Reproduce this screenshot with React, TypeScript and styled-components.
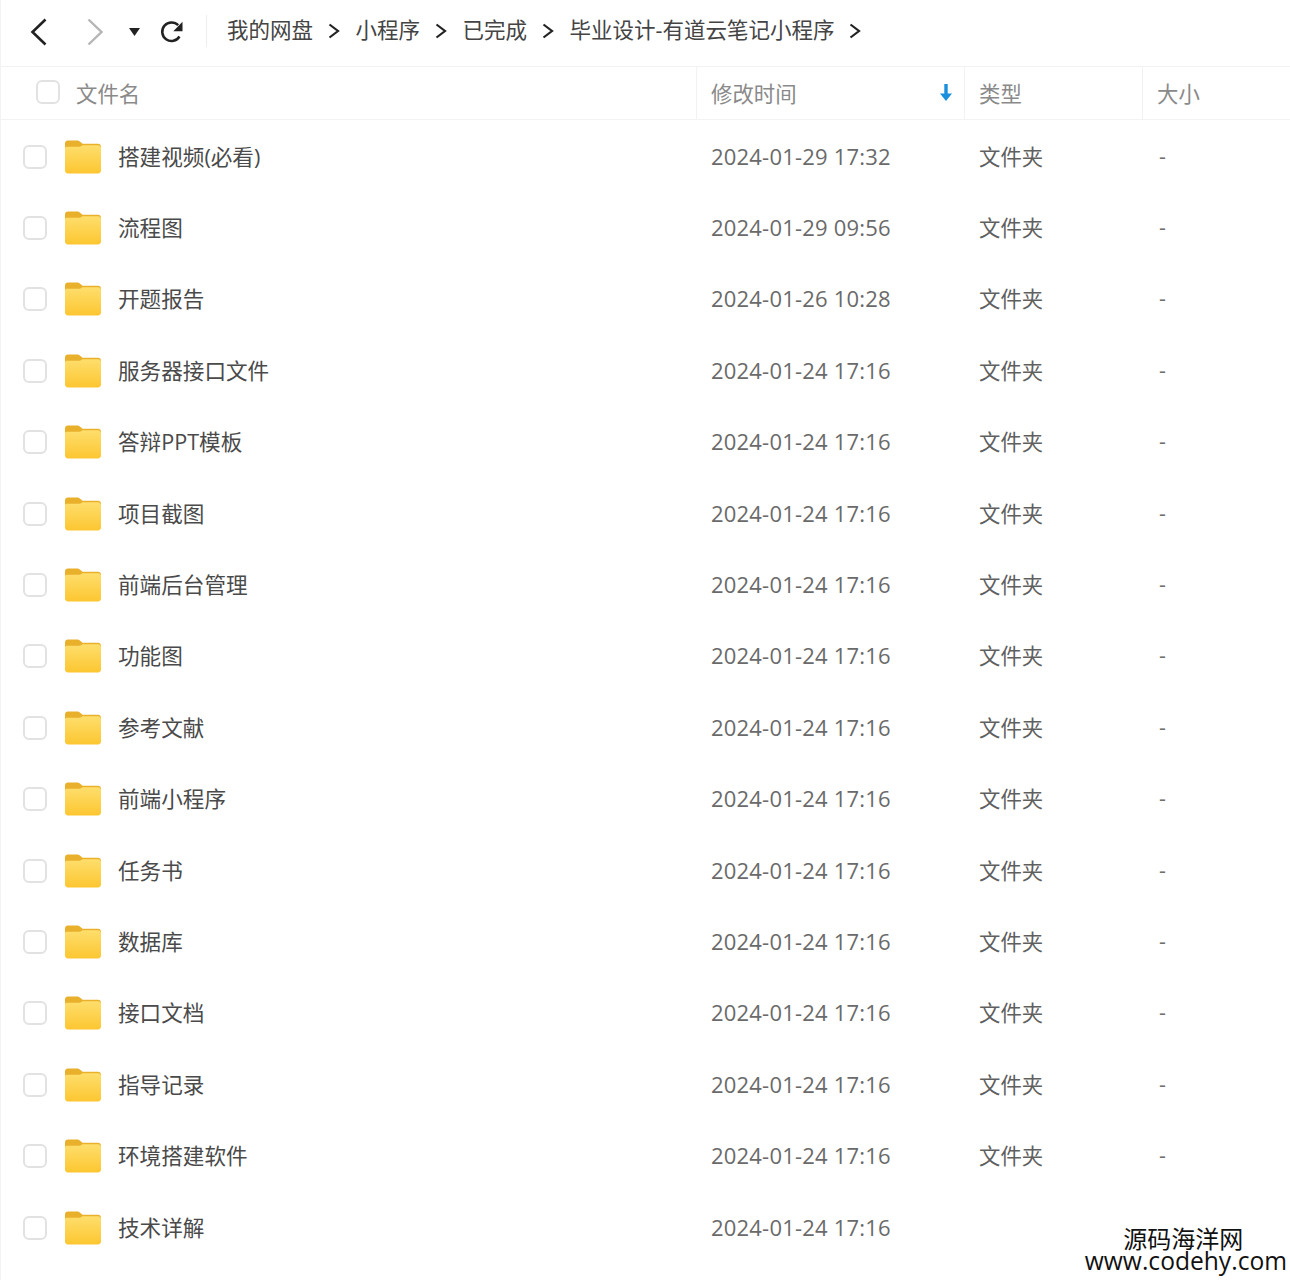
import React, { ReactElement } from 'react';
import styled, { createGlobalStyle } from 'styled-components';

const fontStack = `"Open Sans", "Noto Sans CJK SC", sans-serif`;

const GlobalStyle = createGlobalStyle`
  html, body {
    margin: 0;
    padding: 0;
    background: #fff;
  }
`;

const Page = styled.div`
  position: relative;
  width: 1290px;
  height: 1280px;
  overflow: hidden;
  box-sizing: border-box;
  border-left: 1px solid #f3f3f3;
  background: #fff;
  font-family: ${fontStack};
`;

const Toolbar = styled.div`
  display: flex;
  align-items: center;
  height: 67px;
  box-sizing: border-box;
  padding: 0 0 6px 29px;
  border-bottom: 1px solid #f2f2f2;
`;

const NavIcon = styled.svg<{ $gap: number }>`
  display: block;
  flex: none;
  margin-top: 3px;
  margin-right: ${(p) => p.$gap}px;
`;

const Divider = styled.div`
  width: 1px;
  height: 32px;
  margin: 2px 20px 0 22px;
  background: #eeeeee;
`;

const Crumb = styled.span`
  color: #444;
  font-size: 21.5px;
  line-height: 30px;
  white-space: nowrap;
`;

const CrumbArrow = styled.svg`
  display: block;
  flex: none;
  margin: 2px 15.500px 0 15px;
`;

const HeaderRow = styled.div`
  display: grid;
  grid-template-columns: 695px 268px 178px 1fr;
  height: 53px;
  border-bottom: 1px solid #f3f3f3;
  box-sizing: border-box;
`;

const HeaderCell = styled.div<{ $divided?: boolean }>`
  display: flex;
  align-items: center;
  justify-content: space-between;
  box-sizing: border-box;
  padding: 0 12px 2px 14px;
  color: #8a8a8a;
  font-size: 21.4px;
  border-left: ${(p) => (p.$divided ? '1px solid #f2f2f2' : '0')};
`;

const NameHeader = styled.div`
  display: flex;
  align-items: center;
  gap: 16px;
  padding: 0 0 2px 35px;
  color: #8a8a8a;
  font-size: 21.4px;
`;

const Checkbox = styled.span`
  display: block;
  flex: none;
  width: 20px;
  height: 20px;
  border: 2px solid #e2e2e2;
  border-radius: 6px;
  background: #fff;
`;

const List = styled.div`
  padding-top: 1px;
`;

const Row = styled.div`
  display: grid;
  grid-template-columns: 695px 268px 178px 1fr;
  align-items: center;
  height: 71.4px;
`;

const NameCell = styled.div`
  display: flex;
  align-items: center;
  padding-left: 22px;
`;

const FolderIcon = styled.svg`
  display: block;
  flex: none;
  margin: 0 17px 0 18px;
`;

const FileName = styled.span`
  color: #4a4a4a;
  font-size: 21.6px;
  line-height: 30px;
  white-space: nowrap;
`;

const DateCell = styled.div`
  padding: 0 0 2px 15px;
  color: #6a6a6a;
  font-size: 22px;
  letter-spacing: 0.2px;
  white-space: nowrap;
`;

const TypeCell = styled.div`
  padding: 0 0 3px 15px;
  color: #5f5f5f;
  font-size: 21.4px;
`;

const SizeCell = styled.div`
  padding: 0 0 3px 17px;
  color: #6f6f6f;
  font-size: 21.4px;
`;

const Watermark = styled.div`
  position: absolute;
  right: 3px;
  bottom: 8px;
  display: flex;
  flex-direction: column;
  align-items: center;
  color: #111;
  line-height: 22px;
`;

const WatermarkName = styled.div`
  margin-right: 5px;
  font-size: 24px;
`;

const WatermarkUrl = styled.div`
  font-size: 24.6px;
`;

const crumbs = ['我的网盘', '小程序', '已完成', '毕业设计-有道云笔记小程序'];

const files = [
  ['搭建视频(必看)', '2024-01-29 17:32'],
  ['流程图', '2024-01-29 09:56'],
  ['开题报告', '2024-01-26 10:28'],
  ['服务器接口文件', '2024-01-24 17:16'],
  ['答辩PPT模板', '2024-01-24 17:16'],
  ['项目截图', '2024-01-24 17:16'],
  ['前端后台管理', '2024-01-24 17:16'],
  ['功能图', '2024-01-24 17:16'],
  ['参考文献', '2024-01-24 17:16'],
  ['前端小程序', '2024-01-24 17:16'],
  ['任务书', '2024-01-24 17:16'],
  ['数据库', '2024-01-24 17:16'],
  ['接口文档', '2024-01-24 17:16'],
  ['指导记录', '2024-01-24 17:16'],
  ['环境搭建软件', '2024-01-24 17:16'],
  ['技术详解', '2024-01-24 17:16'],
];

const Folder = ({ id }: { id: number }): ReactElement => (
  <FolderIcon width="36" height="34" viewBox="0 0 37 34">
    <defs>
      <linearGradient id={`folder-${id}`} x1="0" y1="0" x2="0" y2="1">
        <stop offset="0" stopColor="#fede6c" />
        <stop offset="1" stopColor="#fcc631" />
      </linearGradient>
    </defs>
    <path
      d="M3 0h9c2 0 3 .6 4.200 1.800L18 3.500h16c1.700 0 3 1.300 3 3V12H0V3c0-1.700 1.300-3 3-3z"
      fill="#e9b02c"
    />
    <path
      d="M0 8c0-1 .8-1.600 1.800-1.600h13c1.400 0 2.200-.4 3-1.400h16.200c1.700 0 3 1.300 3 3v23c0 1.700-1.300 3-3 3H3c-1.700 0-3-1.300-3-3z"
      fill={`url(#folder-${id})`}
    />
  </FolderIcon>
);

const App = (): ReactElement => (
  <Page>
    <GlobalStyle />
    <Toolbar>
      <NavIcon $gap={38} width="18" height="28" viewBox="0 0 18 28">
        <path d="M15.500 1.500 2.500 14l13 12.500" fill="none" stroke="#222" strokeWidth="2.600" />
      </NavIcon>
      <NavIcon $gap={25} width="18" height="28" viewBox="0 0 18 28">
        <path d="M2.500 1.500 15.500 14l-13 12.500" fill="none" stroke="#b5b5b5" strokeWidth="2.400" />
      </NavIcon>
      <NavIcon $gap={20} width="11" height="8" viewBox="0 0 11 8">
        <path d="M0 0h11L5.500 8z" fill="#222" />
      </NavIcon>
      <NavIcon $gap={0} width="24" height="24" viewBox="0 0 24 24">
        <path
          d="M19.500 16.500A9.300 9.300 0 1 1 18.200 5.200"
          fill="none"
          stroke="#222"
          strokeWidth="2.500"
        />
        <path d="M22.500 1.800v9.400h-9.200z" fill="#222" />
      </NavIcon>
      <Divider />
      {crumbs.map((crumb) => (
        <React.Fragment key={crumb}>
          <Crumb>{crumb}</Crumb>
          <CrumbArrow width="12" height="16" viewBox="0 0 12 16">
            <path d="M1.500 1.500 10 8l-8.500 6.500" fill="none" stroke="#222" strokeWidth="2.200" />
          </CrumbArrow>
        </React.Fragment>
      ))}
    </Toolbar>
    <HeaderRow>
      <NameHeader>
        <Checkbox />
        文件名
      </NameHeader>
      <HeaderCell $divided>
        修改时间
        <svg width="12" height="17" viewBox="0 0 12 17">
          <path d="M4.300 0h3.400v9.500H12L6 17 0 9.500h4.300z" fill="#1a8fdc" />
        </svg>
      </HeaderCell>
      <HeaderCell $divided>类型</HeaderCell>
      <HeaderCell $divided>大小</HeaderCell>
    </HeaderRow>
    <List>
      {files.map(([name, date], index) => {
        const isLast = index === files.length - 1;
        return (
          <Row key={name}>
            <NameCell>
              <Checkbox />
              <Folder id={index} />
              <FileName>{name}</FileName>
            </NameCell>
            <DateCell>{date}</DateCell>
            <TypeCell>{isLast ? '' : '文件夹'}</TypeCell>
            <SizeCell>{isLast ? '' : '-'}</SizeCell>
          </Row>
        );
      })}
    </List>
    <Watermark>
      <WatermarkName>源码海洋网</WatermarkName>
      <WatermarkUrl>www.codehy.com</WatermarkUrl>
    </Watermark>
  </Page>
);

export default App;
